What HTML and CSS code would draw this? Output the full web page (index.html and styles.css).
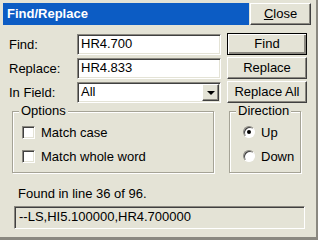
FILE: index.html
```html
<!DOCTYPE html>
<html lang="en">

<head>
  <meta charset="UTF-8">
  <meta name="viewport" content="width=device-width, initial-scale=1.0">
  <title>Find/Replace</title>
  <link rel="stylesheet" href="styles.css">
</head>

<body>
  <div class="window">
    <div class="titlebar">
      <div class="caption">Find/Replace</div>
      <div class="btn close"><u>C</u>lose</div>
    </div>

    <div class="rows">
      <div class="row">
        <span class="label">Find:</span>
        <div class="field">HR4.700</div>
        <div class="btn default">Find</div>
      </div>
      <div class="row">
        <span class="label">Replace:</span>
        <div class="field">HR4.833</div>
        <div class="btn">Replace</div>
      </div>
      <div class="row">
        <span class="label">In Field:</span>
        <div class="field combo">
          <span class="combo-text">All</span>
          <span class="drop"><span class="arrow"></span></span>
        </div>
        <div class="btn">Replace All</div>
      </div>
    </div>

    <div class="groups">
      <div class="group options">
        <span class="legend">Options</span>
        <div class="check"><span class="box"></span>Match case</div>
        <div class="check"><span class="box"></span>Match whole word</div>
      </div>
      <div class="group direction">
        <span class="legend">Direction</span>
        <div class="radio"><span class="dot on"></span>Up</div>
        <div class="radio"><span class="dot"></span>Down</div>
      </div>
    </div>

    <div class="status">Found in line 36 of 96.</div>
    <div class="readout">--LS,HI5.100000,HR4.700000</div>
  </div>
</body>

</html>
```

FILE: styles.css
```css
html,
body {
  margin: 0;
  padding: 0;
  background: #e4e3d6;
  font-size: 13px;
  font-family: "Liberation Sans", Arial, sans-serif;
  color: #000;
}

.window {
  width: 318px;
  height: 240px;
  box-sizing: border-box;
  padding: 3px 5px 0 3px;
  border-right: 2px solid #8a8880;
  border-bottom: 3px solid #8a8880;
  background: #e4e3d6;
}

.titlebar {
  display: flex;
  height: 22px;
}

.caption {
  flex: 1;
  background: #0c5cc4;
  color: #fff;
  font-weight: bold;
  font-size: 13px;
  line-height: 22px;
  padding-left: 4px;
}

.btn {
  box-sizing: border-box;
  width: 80px;
  height: 22px;
  line-height: 19px;
  text-align: center;
  background: #e4e3d6;
  border: 1px solid;
  border-color: #fff #404040 #404040 #fff;
  box-shadow: inset -1px -1px 0 #8a8880;
}

.close {
  width: 61px;
  margin-left: 1px;
}

.default {
  border: 1px solid #000;
  box-shadow: inset 1px 1px 0 #fff, inset -2px -2px 0 #8a8880;
}

.rows {
  display: flex;
  flex-direction: column;
  gap: 2px;
  margin-top: 8px;
  padding-left: 6px;
}

.row {
  display: flex;
  align-items: center;
  height: 22px;
}

.label {
  width: 68px;
}

.field {
  box-sizing: border-box;
  width: 144px;
  height: 21px;
  line-height: 18px;
  padding-left: 3px;
  background: #fff;
  border: 1px solid;
  border-color: #8a8880 #fff #fff #8a8880;
  box-shadow: inset 1px 1px 0 #404040, inset -1px -1px 0 #e4e3d6;
  margin-right: 6px;
}

.combo {
  display: flex;
  justify-content: space-between;
}

.drop {
  box-sizing: border-box;
  width: 17px;
  height: 17px;
  margin: 1px 1px 0 0;
  background: #e4e3d6;
  border: 1px solid;
  border-color: #fff #404040 #404040 #fff;
  box-shadow: inset -1px -1px 0 #8a8880;
  display: flex;
  align-items: center;
  justify-content: center;
}

.arrow {
  width: 0;
  height: 0;
  border-left: 4px solid transparent;
  border-right: 4px solid transparent;
  border-top: 4px solid #000;
  margin-top: 1px;
}

.groups {
  display: flex;
  margin-top: 8px;
  padding-left: 9px;
}

.group {
  position: relative;
  box-sizing: border-box;
  height: 62px;
  border: 1px solid #a5a396;
  box-shadow: inset 1px 1px 0 #fff, 1px 1px 0 #fff;
  padding: 8px 0 0 9px;
}

.legend {
  position: absolute;
  top: -9px;
  left: 6px;
  padding: 0 2px;
  background: #e4e3d6;
}

.options {
  width: 202px;
}

.direction {
  width: 72px;
  margin-left: 15px;
  padding-left: 13px;
}

.check,
.radio {
  display: flex;
  align-items: center;
  height: 24px;
}

.box {
  box-sizing: border-box;
  width: 13px;
  height: 13px;
  margin-right: 6px;
  background: #fff;
  border: 1px solid;
  border-color: #8a8880 #fff #fff #8a8880;
  box-shadow: inset 1px 1px 0 #404040, inset -1px -1px 0 #e4e3d6;
}

.dot {
  box-sizing: border-box;
  width: 12px;
  height: 12px;
  margin-right: 6px;
  border-radius: 50%;
  background: #fff;
  border: 1px solid;
  border-color: #8a8880 #fff #fff #8a8880;
  box-shadow: inset 1px 1px 0 #404040;
  display: flex;
  align-items: center;
  justify-content: center;
}

.dot.on::after {
  content: "";
  width: 4px;
  height: 4px;
  border-radius: 50%;
  background: #000;
}

.status {
  margin: 13px 0 0 15px;
  height: 15px;
}

.readout {
  box-sizing: border-box;
  width: 291px;
  height: 23px;
  margin: 5px 0 0 11px;
  padding-left: 4px;
  line-height: 20px;
  border: 1px solid;
  border-color: #8a8880 #fff #fff #8a8880;
  box-shadow: inset 1px 1px 0 #404040, inset -1px -1px 0 #e4e3d6;
}
```
